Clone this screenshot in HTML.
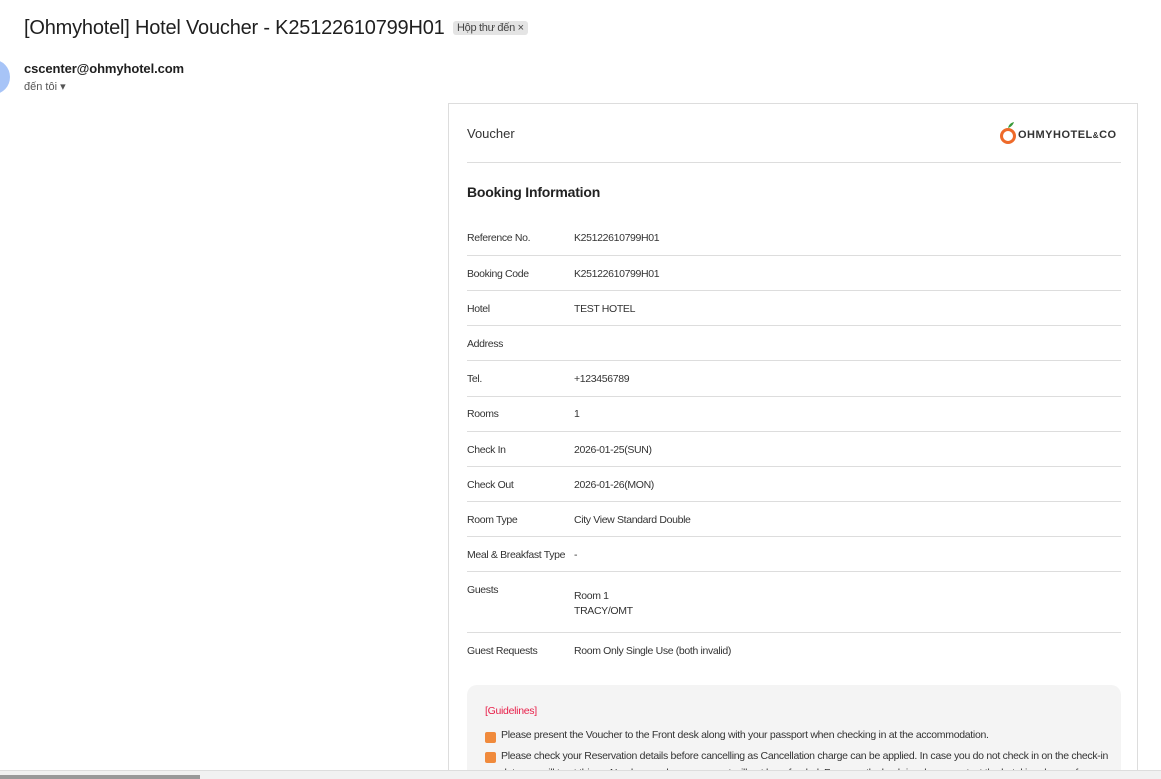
<!DOCTYPE html>
<html><head><meta charset="utf-8"><style>
html,body{margin:0;width:1161px;height:779px;overflow:hidden}
body{background:#fff;font-family:"Liberation Sans","Noto Sans CJK SC",sans-serif;color:#222;position:relative}
.t{position:absolute;white-space:nowrap}
.card{position:absolute;left:448px;top:103px;width:690px;height:676px;border:1px solid #ddd;border-bottom:none;box-sizing:border-box;overflow:hidden}
.row{position:absolute;left:18px;width:654px;font-size:10.5px;color:#333;letter-spacing:-0.35px}
.sep{position:absolute;left:18px;width:654px;height:1px;background:#ddd}
.v{position:absolute;left:107px}
.chk{display:inline-block;width:11px;height:11px;background:#f08a3c;border-radius:2px;position:absolute;left:18px}
</style></head><body>
<div class="t" style="left:24px;top:17px;font-size:20px;letter-spacing:-0.2px;color:#1f1f1f">[Ohmyhotel] Hotel Voucher - K25122610799H01</div>
<div class="t" style="left:453px;top:21px;font-size:11px;letter-spacing:-0.3px;color:#444;background:#e4e4e4;padding:1px 4px;border-radius:3px">Hộp thư đến ×</div>
<div style="position:absolute;left:-22px;top:60px;width:32px;height:34px;border-radius:50%;background:#a7c4f7"></div>
<div class="t" style="left:24px;top:61px;font-size:13px;font-weight:bold;letter-spacing:-0.1px;color:#1f1f1f">cscenter@ohmyhotel.com</div>
<div class="t" style="left:24px;top:80px;font-size:11px;color:#555">đến tôi ▾</div>
<div class="card">
<div class="t" style="left:18px;top:22px;font-size:13px;color:#333">Voucher</div>
<svg style="position:absolute;left:550px;top:17px" width="20" height="24" viewBox="0 0 20 24"><path d="M9 7 C10 3 12 2 15 1 C14 4 12 6 9 7Z" fill="#3a9a3a"/><circle cx="9" cy="15" r="6.5" fill="none" stroke="#ee6a2a" stroke-width="3"/></svg>
<div class="t" style="left:569px;top:25px;font-size:11px;font-weight:bold;color:#333;letter-spacing:0.5px">OHMYHOTEL<span style="font-size:8px">&amp;</span>CO</div>
<div class="sep" style="top:58px"></div>
<div class="t" style="left:18px;top:80px;font-size:14px;font-weight:bold;color:#222;letter-spacing:-0.2px">Booking Information</div>
<div class="row" style="top:128px">Reference No.<span class="v">K25122610799H01</span></div><div class="sep" style="top:151px"></div>
<div class="row" style="top:164px">Booking Code<span class="v">K25122610799H01</span></div><div class="sep" style="top:186px"></div>
<div class="row" style="top:199px">Hotel<span class="v">TEST HOTEL</span></div><div class="sep" style="top:221px"></div>
<div class="row" style="top:234px">Address</div><div class="sep" style="top:256px"></div>
<div class="row" style="top:269px">Tel.<span class="v">+123456789</span></div><div class="sep" style="top:292px"></div>
<div class="row" style="top:304px">Rooms<span class="v">1</span></div><div class="sep" style="top:327px"></div>
<div class="row" style="top:340px">Check In<span class="v">2026-01-25(SUN)</span></div><div class="sep" style="top:362px"></div>
<div class="row" style="top:375px">Check Out<span class="v">2026-01-26(MON)</span></div><div class="sep" style="top:397px"></div>
<div class="row" style="top:410px">Room Type<span class="v">City View Standard Double</span></div><div class="sep" style="top:432px"></div>
<div class="row" style="top:445px">Meal &amp; Breakfast Type<span class="v">-</span></div><div class="sep" style="top:467px"></div>
<div class="row" style="top:480px">Guests<span class="v" style="top:5px;line-height:15px">Room 1<br>TRACY/OMT</span></div><div class="sep" style="top:528px"></div>
<div class="row" style="top:541px">Guest Requests<span class="v">Room Only Single Use (both invalid)</span></div>
<div style="position:absolute;left:18px;top:581px;width:654px;height:120px;background:#f4f4f4;border-radius:10px;font-size:10.5px;letter-spacing:-0.3px;color:#333">
<div class="t" style="left:18px;top:20px;color:#e8204a">[Guidelines]</div>
<span class="chk" style="top:47px"></span><div class="t" style="left:34px;top:44px">Please present the Voucher to the Front desk along with your passport when checking in at the accommodation.</div>
<span class="chk" style="top:67px"></span><div class="t" style="left:34px;top:65px">Please check your Reservation details before cancelling as Cancellation charge can be applied. In case you do not check in on the check-in</div>
<div class="t" style="left:34px;top:82px">date, we will treat this as No-show and your payment will not be refunded. For smooth check-in, please contact the hotel in advance for</div>
</div>
</div>
<div style="position:absolute;left:0;top:770px;width:1161px;height:9px;background:#f1f1f1;border-top:1px solid #ddd;box-sizing:border-box"></div>
<div style="position:absolute;left:0;top:775px;width:200px;height:4px;background:#999"></div>
</body></html>
